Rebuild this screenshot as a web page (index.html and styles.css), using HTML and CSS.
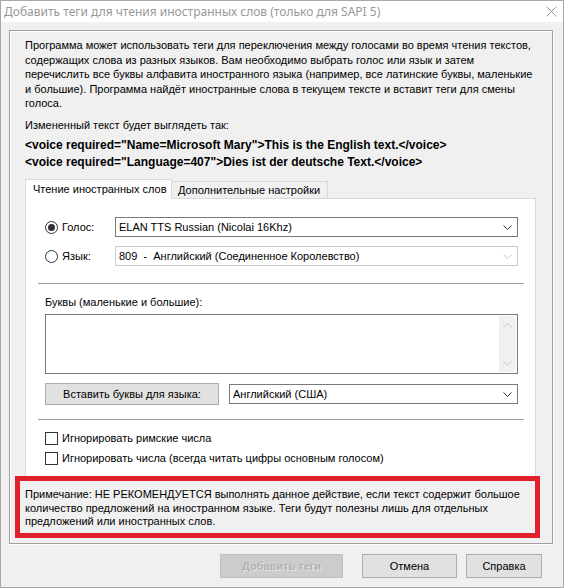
FILE: index.html
```html
<!DOCTYPE html>
<html>
<head>
    <link rel="stylesheet" href="styles.css">
</head>
<body>
    <div class="window">
        <div class="titlebar">
            <span class="title">Добавить теги для чтения иностранных слов (только для SAPI 5)</span>
            <svg class="close" width="11" height="11" viewBox="0 0 11 11">
                <path d="M0.5 0.5 L10.5 10.5 M10.5 0.5 L0.5 10.5" stroke="#9a9a9a" stroke-width="1" fill="none"/>
            </svg>
        </div>
        <div class="client">
            <div class="group">
                <p class="intro">
                    Программа может использовать теги для переключения между голосами во время чтения текстов,<br>
                    содержащих слова из разных языков. Вам необходимо выбрать голос или язык и затем<br>
                    перечислить все буквы алфавита иностранного языка (например, все латинские буквы, маленькие<br>
                    и большие). Программа найдёт иностранные слова в текущем тексте и вставит теги для смены<br>
                    голоса.
                </p>
                <p class="preview-label">Измененный текст будет выглядеть так:</p>
                <div class="code">
                    <div>&lt;voice required="Name=Microsoft Mary"&gt;This is the English text.&lt;/voice&gt;</div>
                    <div>&lt;voice required="Language=407"&gt;Dies ist der deutsche Text.&lt;/voice&gt;</div>
                </div>

                <div class="tabs">
                    <div class="tab active">Чтение иностранных слов</div>
                    <div class="tab">Дополнительные настройки</div>
                </div>
                <div class="page">
                    <div class="row">
                        <label class="choice"><span class="radio on"></span>Голос:</label>
                        <div class="combo wide">
                            <span>ELAN TTS Russian (Nicolai 16Khz)</span>
                            <svg width="9" height="5" viewBox="0 0 9 5"><polyline points="0.5,0.5 4.5,4.5 8.5,0.5" stroke="#333" fill="none"/></svg>
                        </div>
                    </div>
                    <div class="row">
                        <label class="choice"><span class="radio"></span>Язык:</label>
                        <div class="combo wide disabled">
                            <span>809&nbsp; - &nbsp;Английский (Соединенное Королевство)</span>
                            <svg width="9" height="5" viewBox="0 0 9 5"><polyline points="0.5,0.5 4.5,4.5 8.5,0.5" stroke="#c4c4c4" fill="none"/></svg>
                        </div>
                    </div>

                    <div class="rule"></div>

                    <div class="field-label">Буквы (маленькие и большие):</div>
                    <div class="memo">
                        <div class="memo-text"></div>
                        <div class="scrollbar">
                            <svg width="9" height="5" viewBox="0 0 9 5"><polyline points="0.5,4.5 4.5,0.5 8.5,4.5" stroke="#c4c4c4" fill="none"/></svg>
                            <svg width="9" height="5" viewBox="0 0 9 5"><polyline points="0.5,0.5 4.5,4.5 8.5,0.5" stroke="#c4c4c4" fill="none"/></svg>
                        </div>
                    </div>
                    <div class="insert-row">
                        <div class="button insert">Вставить буквы для языка:</div>
                        <div class="combo lang">
                            <span>Английский (США)</span>
                            <svg width="9" height="5" viewBox="0 0 9 5"><polyline points="0.5,0.5 4.5,4.5 8.5,0.5" stroke="#333" fill="none"/></svg>
                        </div>
                    </div>

                    <div class="rule second"></div>

                    <label class="check"><span class="box"></span>Игнорировать римские числа</label>
                    <label class="check"><span class="box"></span>Игнорировать числа (всегда читать цифры основным голосом)</label>
                </div>

                <div class="note">
                    Примечание: НЕ РЕКОМЕНДУЕТСЯ выполнять данное действие, если текст содержит большое<br>
                    количество предложений на иностранном языке. Теги будут полезны лишь для отдельных<br>
                    предложений или иностранных слов.
                </div>
            </div>

            <div class="buttons">
                <div class="button add disabled">Добавить теги</div>
                <div class="button cancel">Отмена</div>
                <div class="button help">Справка</div>
            </div>
        </div>
    </div>
</body>
</html>
```

FILE: styles.css
```css
* {
    box-sizing: border-box;
}

body {
    margin: 0;
    background: #ffffff;
    color: #000000;
    font-family: "Liberation Sans", Arial, sans-serif;
    font-size: 11px;
    white-space: nowrap;
}

.window {
    width: 564px;
    height: 588px;
    border: 1px solid #a8a8a8;
    background: #f0f0f0;
    display: flex;
    flex-direction: column;
}

.titlebar {
    height: 21px;
    flex: none;
    background: #ffffff;
    display: flex;
    align-items: center;
    justify-content: space-between;
    padding: 0 6px 0 3px;
}

.title {
    font-family: "Noto Sans", sans-serif;
    font-size: 12px;
    color: #999999;
}

.client {
    flex: 1;
    padding: 8px 10px 9px 8px;
    display: flex;
    flex-direction: column;
}

.group {
    height: 514px;
    flex: none;
    border: 1px solid #a0a0a0;
    box-shadow: inset 1px 1px 0 #ffffff, 1px 1px 0 #ffffff;
    padding: 7px 16px 0 15px;
}

.group p {
    margin: 0;
}

.intro {
    line-height: 14.5px;
}

.group .preview-label {
    margin-top: 7px;
    line-height: 14.5px;
}

.code {
    margin-top: 5px;
    font-size: 12px;
    font-weight: bold;
    line-height: 17px;
}

/* tab control */
.tabs {
    display: flex;
    align-items: flex-end;
    height: 19px;
    margin-top: 8px;
    position: relative;
    z-index: 1;
}

.tab {
    height: 17px;
    padding: 0 6px;
    border: 1px solid #d9d9d9;
    border-bottom: none;
    background: #f0f0f0;
    display: flex;
    align-items: center;
    margin-left: -1px;
    width: 157px;
}

.tab.active {
    height: 20px;
    width: 147px;
    margin-left: 0;
    margin-bottom: -1px;
    background: #ffffff;
    padding-left: 7px;
    padding-bottom: 1px;
}

.page {
    height: 278px;
    background: #ffffff;
    border: 1px solid #d9d9d9;
    border-bottom: none;
    padding: 18px 11px 0 12px;
}

.row {
    display: flex;
    align-items: center;
    height: 20px;
    margin: 0 6px 9px 7px;
}

.choice {
    width: 70px;
    display: flex;
    align-items: center;
    gap: 4px;
}

.radio {
    width: 13px;
    height: 13px;
    border: 1px solid #333333;
    border-radius: 50%;
    background: #ffffff;
    display: flex;
    align-items: center;
    justify-content: center;
}

.radio.on::after {
    content: '';
    width: 7px;
    height: 7px;
    border-radius: 50%;
    background: #333333;
}

.combo {
    height: 20px;
    border: 1px solid #7a7a7a;
    background: #ffffff;
    display: flex;
    align-items: center;
    justify-content: space-between;
    padding: 0 5px 0 3px;
}

.combo.wide {
    width: 403px;
}

.combo.disabled {
    border-color: #cccccc;
}

.combo.lang {
    width: 289px;
}

.rule {
    border-top: 1px solid #a0a0a0;
    margin-top: 17px;
}

.rule.second {
    margin-top: 14px;
}

.field-label {
    margin: 11px 0 0 7px;
    line-height: 14px;
}

.memo {
    height: 60px;
    width: 473px;
    margin: 5px 0 0 7px;
    border: 1px solid #7a7a7a;
    background: #ffffff;
    display: flex;
    justify-content: space-between;
    padding: 1px;
}

.scrollbar {
    width: 17px;
    background: #f0f0f0;
    display: flex;
    flex-direction: column;
    justify-content: space-between;
    align-items: center;
    padding: 7px 0 6px;
}

.insert-row {
    display: flex;
    align-items: center;
    gap: 10px;
    margin: 9px 0 0 7px;
}

.button {
    height: 22px;
    border: 1px solid #adadad;
    background: #e1e1e1;
    display: flex;
    align-items: center;
    justify-content: center;
}

.button.insert {
    width: 174px;
}

.check {
    display: flex;
    align-items: center;
    gap: 4px;
    height: 14px;
    margin: 11px 0 0 7px;
}

.check + .check {
    margin-top: 6px;
}

.box {
    width: 13px;
    height: 13px;
    border: 1px solid #333333;
    background: #ffffff;
}

.note {
    width: 525px;
    height: 62px;
    margin-left: -10px;
    border: 5px solid #e0212b;
    background: #f0f0f0;
    padding: 7px 5px 0;
    line-height: 13.5px;
}

/* dialog buttons */
.buttons {
    display: flex;
    margin-top: 10px;
    padding-left: 211px;
}

.buttons .button {
    height: 24px;
}

.button.add {
    width: 123px;
}

.button.cancel {
    width: 95px;
    margin-left: 19px;
}

.button.help {
    width: 76px;
    margin-left: 9px;
}

.button.disabled {
    background: #cccccc;
    border-color: #bfbfbf;
    color: #b0b0b0;
    font-weight: bold;
    text-shadow: 1px 1px 0 #e8e8e8;
}
```
